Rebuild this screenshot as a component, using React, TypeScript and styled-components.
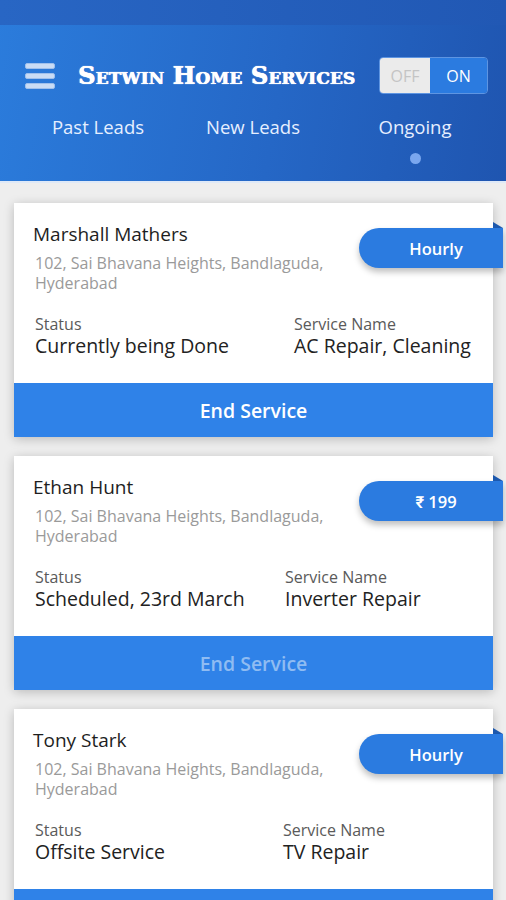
import React from 'react';
import styled, { createGlobalStyle } from 'styled-components';

const GlobalStyle = createGlobalStyle`
  html, body {
    margin: 0;
    padding: 0;
    background: #eeeeee;
    font-family: "Open Sans", Roboto, "Liberation Sans", sans-serif;
  }
`;

const Page = styled.div`
  width: 506px;
  height: 900px;
  overflow: hidden;
  background: #eeeeee;
`;

const Header = styled.div`
  background: linear-gradient(100deg, #2b7cdc 0%, #2567c6 55%, #1f55b0 100%);
  border-bottom: 2px solid #dfe9f7;
`;

const StatusBar = styled.div`
  height: 25px;
  background: linear-gradient(90deg, #2866c4 0%, #2158b4 100%);
`;

const Toolbar = styled.div`
  display: flex;
  align-items: center;
  height: 37px;
  padding: 32px 18px 0 25px;
`;

const Burger = styled.div`
  display: flex;
  flex-direction: column;
  gap: 4px;
  width: 30px;
  margin-right: 23px;

  span {
    height: 6px;
    border-radius: 2px;
    background: #c9dcf5;
    border: 1px solid #9fc0ec;
    box-sizing: border-box;
  }
`;

const Title = styled.div`
  flex: 1;
  color: #fff;
  font-family: "DejaVu Serif", "Liberation Serif", serif;
  font-weight: 900;
  font-size: 24px;
  font-variant: small-caps;
  letter-spacing: 0.1px;
  white-space: nowrap;
  text-shadow: 0 0 1px #fff, 0.5px 0 0 #fff;
`;

const Toggle = styled.div`
  display: flex;
  height: 37px;
  width: 109px;
  border: 1px solid #5e95e2;
  border-radius: 4px;
  overflow: hidden;
  box-sizing: border-box;
`;

const ToggleHalf = styled.div<{ $on?: boolean }>`
  flex: ${p => (p.$on ? 58 : 51)};
  display: flex;
  align-items: center;
  justify-content: center;
  font-size: 16px;
  background: ${p => (p.$on ? '#2b7be0' : '#ebebeb')};
  color: ${p => (p.$on ? '#ffffff' : '#c4c4c4')};
`;

const Tabs = styled.div`
  display: grid;
  grid-template-columns: 136px 174px 150px;
  padding: 22px 0 0 30px;
  height: 87px;
  box-sizing: border-box;
`;

const Tab = styled.div<{ $active?: boolean }>`
  display: flex;
  flex-direction: column;
  align-items: center;
  color: #e6efff;
  font-size: 18.5px;
  line-height: 22px;
  gap: 15px;
  white-space: nowrap;

  &::after {
    content: '';
    width: 11px;
    height: 11px;
    border-radius: 50%;
    background: ${p => (p.$active ? '#7aa7ef' : 'transparent')};
  }
`;

const List = styled.div`
  display: flex;
  flex-direction: column;
  gap: 19px;
  padding: 20px 13px 0 14px;
`;

const Card = styled.div`
  position: relative;
  background: #fff;
  box-shadow: 0 2px 10px rgba(0, 0, 0, 0.22);
`;

const Body = styled.div`
  padding: 19px 20px 25px 19px;
`;

const Name = styled.div`
  font-size: 19px;
  color: #1e1e1e;
  line-height: 24px;
`;

const Address = styled.div`
  font-size: 16px;
  color: #9a9a9a;
  line-height: 20px;
  width: 320px;
  margin: 7px 0 0 2px;
`;

const Info = styled.div<{ $split: number }>`
  display: grid;
  grid-template-columns: ${p => p.$split}px 1fr;
  margin: 21px 0 0 2px;
`;

const Label = styled.div`
  font-size: 16px;
  color: #5a5a5a;
  line-height: 20px;
`;

const Value = styled.div`
  font-size: 19.5px;
  color: #222;
  line-height: 24px;
  white-space: nowrap;
`;

const Action = styled.div<{ $disabled?: boolean }>`
  height: 54px;
  display: flex;
  align-items: center;
  justify-content: center;
  background: #2f82e8;
  color: ${p => (p.$disabled ? '#8fbcf2' : '#ffffff')};
  font-size: 19.5px;
  font-weight: 600;
`;

const Badge = styled.div`
  position: absolute;
  top: 25px;
  right: -10px;
  width: 144px;
  height: 40px;
  border-radius: 20px 0 0 20px;
  background: #2b7be0;
  color: #fff;
  font-size: 16.5px;
  font-weight: 600;
  display: flex;
  align-items: center;
  justify-content: center;
  padding-left: 10px;
  box-sizing: border-box;
  box-shadow: 0 4px 6px rgba(0, 0, 0, 0.25);

  &::before {
    content: '';
    position: absolute;
    right: 0;
    top: -6px;
    border-left: 10px solid #1c58ad;
    border-top: 6px solid transparent;
  }
`;

type Lead = {
  name: string;
  badge: string;
  status: string;
  service: string;
  split: number;
  disabled?: boolean;
};

const leads: Lead[] = [
  { name: 'Marshall Mathers', badge: 'Hourly', status: 'Currently being Done', service: 'AC Repair, Cleaning', split: 259 },
  { name: 'Ethan Hunt', badge: '₹ 199', status: 'Scheduled, 23rd March', service: 'Inverter Repair', split: 250, disabled: true },
  { name: 'Tony Stark', badge: 'Hourly', status: 'Offsite Service', service: 'TV Repair', split: 248 },
];

const App: React.FC = () => {
  return (
    <Page>
      <GlobalStyle />
      <Header>
        <StatusBar />
        <Toolbar>
          <Burger>
            <span />
            <span />
            <span />
          </Burger>
          <Title>Setwin Home Services</Title>
          <Toggle>
            <ToggleHalf>OFF</ToggleHalf>
            <ToggleHalf $on>ON</ToggleHalf>
          </Toggle>
        </Toolbar>
        <Tabs>
          <Tab>Past Leads</Tab>
          <Tab>New Leads</Tab>
          <Tab $active>Ongoing</Tab>
        </Tabs>
      </Header>
      <List>
        {leads.map(lead => (
          <Card key={lead.name}>
            <Badge>{lead.badge}</Badge>
            <Body>
              <Name>{lead.name}</Name>
              <Address>102, Sai Bhavana Heights, Bandlaguda, Hyderabad</Address>
              <Info $split={lead.split}>
                <div>
                  <Label>Status</Label>
                  <Value>{lead.status}</Value>
                </div>
                <div>
                  <Label>Service Name</Label>
                  <Value>{lead.service}</Value>
                </div>
              </Info>
            </Body>
            <Action $disabled={lead.disabled}>End Service</Action>
          </Card>
        ))}
      </List>
    </Page>
  );
};

export default App;
